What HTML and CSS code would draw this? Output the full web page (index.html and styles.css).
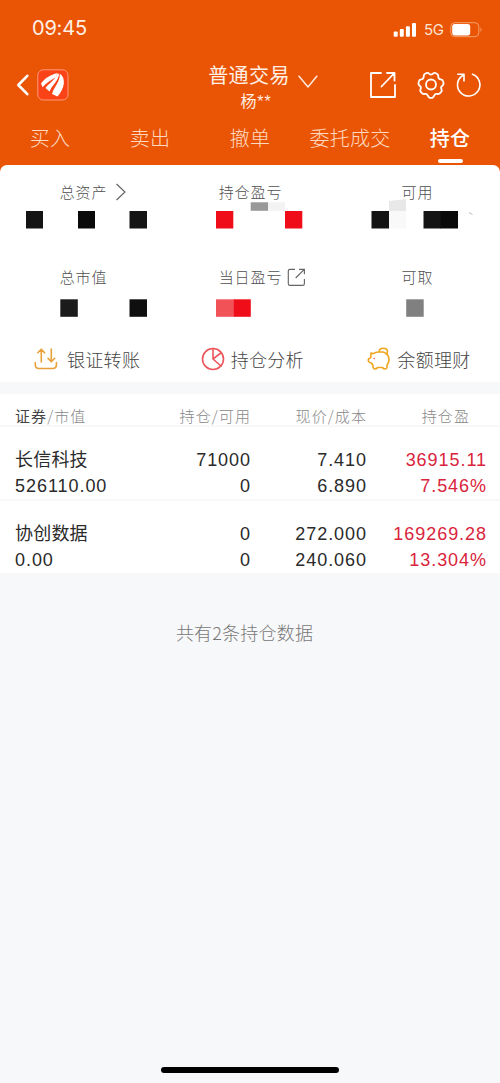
FILE: index.html
```html
<!DOCTYPE html>
<html lang="zh-CN">
<head>
<meta charset="utf-8">
<title>普通交易</title>
<link rel="stylesheet" href="styles.css">
</head>
<body>
<div class="screen">
  <header class="header">
    <div class="status">
      <span class="time">09:45</span>
      <div class="signals">
        <svg width="24" height="16" viewBox="0 0 24 16" fill="#fff"><rect x="0.7" y="9.5" width="4" height="5.3" rx="1"/><rect x="6.8" y="7" width="4" height="7.8" rx="1"/><rect x="12.9" y="4.2" width="4" height="10.6" rx="1"/><rect x="19" y="1" width="4" height="13.8" rx="1"/></svg>
        <span class="net">5G</span>
        <svg class="battery" width="33" height="16" viewBox="0 0 33 16"><rect x=".8" y=".7" width="28" height="14" rx="4" fill="none" stroke="#f7a070" stroke-width="1"/><rect x="2.2" y="2" width="18" height="11.4" rx="2.6" fill="#fff"/><path d="M30.5 5.2q2.2 2.4 0 4.8z" fill="#f7a070"/></svg>
      </div>
    </div>
    <div class="nav">
      <div class="nav-side">
        <svg width="14" height="24" viewBox="0 0 14 24" fill="none" stroke="#fff" stroke-width="2.6" stroke-linecap="round" stroke-linejoin="round"><path d="M11.3 2.8 2.3 12l9 9.2"/></svg>
        <svg class="logo" width="32" height="32" viewBox="0 0 32 32"><rect x=".8" y=".8" width="30.2" height="30.2" rx="5.5" fill="#fb4318" stroke="#ff9a78" stroke-width="1"/><g fill="#fff"><path d="M20 4.3C14 5.500 7.500 9.500 4 14.500L5.500 18.200C9.500 13.500 15 10.500 19.500 8Z"/><path d="M20.500 4.300C19.500 10 13 13 8.500 19L12.500 22.500C15.500 15.500 21.500 12 22 5Z"/><path d="M22.800 4.800C23 13 17.500 17 15 25L20.500 27.500C27.500 20 29.500 9 22.800 4.800Z"/></g></svg>
      </div>
      <div class="account">
        <div class="account-text"><div class="account-title">普通交易</div><div class="account-name">杨**</div></div>
        <svg class="caret" width="20" height="14" viewBox="0 0 20 14" fill="none" stroke="#ffe9dc" stroke-width="1.5" stroke-linecap="round" stroke-linejoin="round"><path d="M1 1.200 10 12 18.800 1.200"/></svg>
      </div>
      <div class="actions">
        <svg width="28" height="28" viewBox="0 0 28 28" fill="none" stroke="#fff" stroke-width="1.8"><path d="M12 2H2v24h24V14M18 2h7.500v7.500M25 2.500 12.500 15.500" stroke-linecap="round" stroke-linejoin="round"/></svg>
        <svg class="gear" width="28" height="28" viewBox="0 0 28 28" fill="none" stroke="#fff" stroke-width="1.8" stroke-linejoin="round"><path d="M9.500 2q1.500-.6 2.800.8 1.700 1.500 3.400 0Q17 1.400 18.500 2l2 1.300q1 .8.8 2.500.2 2.300 2.500 2.600 2 .2 2.300 2l.5 2.200q0 1.400-1.500 2.400-1.600 1.100-.7 3 .8 1.700-.2 2.800l-1.500 1.600q-1.300.8-2.900.5-1.900-.2-2.600 1.700-.5 1.700-1.900 2.300h-2.600q-1.400-.6-1.900-2.300-.7-1.900-2.600-1.700-1.600.3-2.900-.5l-1.500-1.600q-1-1.100-.2-2.800.9-1.900-.7-3Q1.400 14 1.400 12.600l.5-2.200q.3-1.800 2.300-2 2.300-.3 2.500-2.600-.2-1.700.8-2.500Z"/><circle cx="14" cy="13.500" r="5"/></svg>
        <svg class="refresh" width="26" height="28" viewBox="0 0 26 28" fill="none" stroke="#fff" stroke-width="1.600" stroke-linecap="round" stroke-linejoin="round"><path d="M16.500 3.300A11.200 11.200 0 1 1 7 4.200M1.800 3.200H8V10"/></svg>
      </div>
    </div>
    <nav class="tabs">
      <span class="tab">买入</span><span class="tab">卖出</span><span class="tab">撤单</span><span class="tab">委托成交</span><span class="tab tab-active">持仓</span>
    </nav>
  </header>

  <section class="summary">
    <div class="stats">
      <div class="stat"><div class="label">总资产<svg class="label-icon arrow" width="12" height="18" viewBox="0 0 12 18" fill="none" stroke="#666" stroke-width="1.200"><path d="M1.500 1 10 9 1.500 17"/></svg></div>
        <svg class="mosaic" viewBox="0 200 167 32" width="167" height="32"><path fill="#141414" d="M26 211h17v17.500H26zM129.500 211H147v17.500h-17.500z"/><path fill="#0a0a0a" d="M78 211h17v17.500H78z"/></svg></div>
      <div class="stat"><div class="label">持仓盈亏</div>
        <svg class="mosaic" viewBox="167 200 167 32" width="167" height="32"><path fill="#ee0d18" d="M216 211h17.300v17.500H216zM285 211h17.300v17.500H285z"/><path fill="#999" d="M250.700 202.300H268v8.500h-17.300z"/><path fill="#f3f3f3" d="M268 202.300h17v8.500h-17z"/></svg></div>
      <div class="stat"><div class="label">可用</div>
        <svg class="mosaic" viewBox="334 200 167 32" width="167" height="32"><path fill="#141414" d="M371.500 211H389v17.500h-17.500z"/><path fill="#e8e8e8" d="M389 201l17-2v12h-17z"/><path fill="#f9f9f9" d="M389 211h17v17.500h-17z"/><path fill="#141414" d="M423.500 211h17.500v17.500h-17.500z"/><path fill="#0a0a0a" d="M440.500 211H458v17.500h-17.500z"/><path d="M469 212.500l3.500 2" stroke="#aaa" stroke-width=".8"/></svg></div>
      <div class="stat"><div class="label">总市值</div>
        <svg class="mosaic" viewBox="0 285 167 36" width="167" height="36"><path fill="#1b1b1b" d="M60.300 299.300h17.500v17.500H60.300z"/><path fill="#0f0f0f" d="M129.500 299.300H147v17.500h-17.500z"/></svg></div>
      <div class="stat"><div class="label">当日盈亏<svg class="label-icon external" width="19" height="19" viewBox="0 0 19 19" fill="none" stroke="#666" stroke-width="1.150"><path d="M8 1.300H3Q1.300 1.300 1.300 3v12.700q0 1.700 1.700 1.700h12.700q1.700 0 1.700-1.700V11M12 1.300h5.400v5M17 1.700 8.700 10"/></svg></div>
        <svg class="mosaic" viewBox="167 285 167 36" width="167" height="36"><path fill="#f15258" d="M216 299.300h17.300v17.500H216z"/><path fill="#ee0d18" d="M233.300 299.300h17.500v17.500h-17.500z"/></svg></div>
      <div class="stat"><div class="label">可取</div>
        <svg class="mosaic" viewBox="334 285 167 36" width="167" height="36"><path fill="#808080" d="M406.200 299.300h17.500v17.500h-17.500z"/></svg></div>
    </div>
    <div class="links">
      <div class="link"><svg width="24" height="24" viewBox="0 0 24 24" fill="none" stroke="#e8a13a" stroke-width="1.600" stroke-linecap="round" stroke-linejoin="round"><path d="M7.300 15V2.300M3.800 5.800 7.300 2.200l3.300 3.600M17.300 2v12.700M14 11.300l3.300 3.500 3.400-3.500M1.300 15.500v2.300q0 3.700 3.700 3.700h13.700q3.700 0 3.700-3.700v-2.300"/></svg><span>银证转账</span></div>
      <div class="link link-analysis"><svg width="24" height="24" viewBox="0 0 24 24" fill="none" stroke="#ed555c" stroke-width="1.600" stroke-linecap="round" stroke-linejoin="round"><circle cx="12" cy="12" r="10.500"/><path d="M12 1.500V12l8 7M12 12l8-6.200"/></svg><span>持仓分析</span></div>
      <div class="link link-savings"><svg width="24" height="24" viewBox="0 0 24 24" fill="none" stroke="#efa51e" stroke-width="1.600" stroke-linecap="round" stroke-linejoin="round"><path d="M4 6Q5.800 7 7 6.300 9 5 12 5h4q6 1.500 6 8 0 3-2 5v2.500q-.5 1.500-2 1.500t-2.500-1.500H10.500Q9.500 22 8 22T6 20V18.500L4.500 16Q1.500 15.500 1.300 13.500T3.800 10.500ZM12 5q.4-3.700 4-3.700 4.500 0 4.500 3.500 0 1.700-1.200 2.500"/><circle cx="7.200" cy="11.500" r=".8" fill="#ed555c" stroke="none"/></svg><span>余额理财</span></div>
    </div>
  </section>

  <section class="holdings">
    <div class="row head"><span><b>证券</b>/市值</span><span>持仓/可用</span><span>现价/成本</span><span class="cut">持仓盈</span></div>
    <div class="row"><div><p class="name">长信科技</p><p>526110.00</p></div><div><p>71000</p><p>0</p></div><div><p>7.410</p><p>6.890</p></div><div class="gain"><p>36915.11</p><p>7.546%</p></div></div>
    <div class="row"><div><p class="name">协创数据</p><p>0.00</p></div><div><p>0</p><p>0</p></div><div><p>272.000</p><p>240.060</p></div><div class="gain"><p>169269.28</p><p>13.304%</p></div></div>
  </section>
  <div class="total">共有2条持仓数据</div>
  <div class="home"></div>
</div>
</body>
</html>
```
FILE: styles.css
```css
* { box-sizing: border-box; }
body { margin: 0; font-family: "Liberation Sans", "Noto Sans CJK SC", sans-serif; color: #2a2a2a; }
p { margin: 0; }
svg { display: block; flex: none; }
.screen { width: 500px; height: 1083px; background: #f7f8fa; display: flex; flex-direction: column; overflow: hidden; }
.header { height: 172px; background: #e95504; color: #fff; flex: none; }
.status { height: 56px; padding: 15px 17px 0 32px; display: flex; justify-content: space-between; }
.time { font: 400 20px/26px Inter, sans-serif; color: #fff0e6; letter-spacing: -.2px; }
.signals { display: flex; align-items: center; height: 30px; }
.net { font: 400 15px/20px Inter, sans-serif; color: #ffe3d2; margin-left: 7px; width: 26px; letter-spacing: -.3px; }
.battery { margin-top: -1px; }
.nav { height: 60px; padding: 0 18px 0 16px; display: grid; grid-template-columns: 1fr auto 1fr; align-items: center; }
.nav-side { display: flex; align-items: center; gap: 7px; margin-top: -3px; }
.account { display: flex; padding: 2px 0 0 28px; }
.account-text { text-align: center; color: #fff0e6; }
.account-title { font-size: 20px; line-height: 28px; letter-spacing: .4px; }
.account-name { font-size: 16px; line-height: 23px; padding-left: 14px; letter-spacing: .9px; }
.caret { margin: 13px 0 0 8px; }
.actions { display: flex; align-items: center; justify-content: flex-end; margin-top: -2px; }
.gear { margin-left: 20px; }
.refresh { margin-left: 11px; }
.tabs { display: grid; grid-template-columns: repeat(5, 100px); height: 49px; padding-top: 1px; }
.tab { display: flex; flex-direction: column; align-items: center; font-size: 20px; line-height: 44px; letter-spacing: .3px; font-weight: 300; color: #ffd9c2; }
.tab-active { font-weight: 500; color: #fff; }
.tab-active::after { content: ""; width: 25px; height: 4px; border-radius: 2px; background: #fff; margin-top: -2px; }
.summary { height: 217px; margin-top: -7px; background: #fff; border-radius: 7px 7px 0 0; flex: none; }
.stats { display: grid; grid-template-columns: repeat(3, 1fr); grid-template-rows: 85px 85px; }
.stat { padding-top: 17px; }
.label { position: relative; width: max-content; margin: 0 auto; height: 22px; font-size: 15px; line-height: 22px; letter-spacing: .9px; font-weight: 300; color: #505050; }
.label-icon { position: absolute; left: 100%; top: 1px; }
.arrow { margin-left: 8px; }
.external { margin-left: 5px; }
.mosaic { margin-top: -4px; overflow: visible; }
.links { display: flex; padding-top: 10px; }
.link { width: 167px; padding-left: 34px; display: flex; align-items: center; gap: 9px; height: 28px; font-size: 18px; font-weight: 300; letter-spacing: .3px; color: #444; }
.link-analysis { gap: 6px; }
.link-savings { gap: 6px; }
.holdings { margin-top: 12px; background: #fff; flex: none; }
.row { display: grid; grid-template-columns: 135px 101px 116px 120px; padding: 21px 13px 0 15px; height: 74px; font-size: 18px; line-height: 25.5px; letter-spacing: .95px; text-align: right; border-bottom: 2px solid #f7f8fa; }
.row:last-child { height: 72px; border-bottom: 0; }
.row > :first-child { text-align: left; }
.name { letter-spacing: .2px; }
.row.head { height: 33px; padding-top: 11px; font-family: "Noto Sans CJK SC", sans-serif; font-size: 15px; line-height: 22px; letter-spacing: 1.1px; font-weight: 300; color: #888; }
.head b { font-weight: 400; color: #444; }
.row .cut { padding-right: 17px; }
.gain { color: #d9243b; }
.total { margin-top: 46px; text-align: center; font-family: "Noto Sans CJK SC", sans-serif; font-size: 18px; line-height: 26px; font-weight: 300; color: #777; padding-right: 11px; letter-spacing: .2px; }
.home { width: 178px; height: 6px; border-radius: 3px; background: #000; margin: auto 161px 10px; flex: none; }
```
